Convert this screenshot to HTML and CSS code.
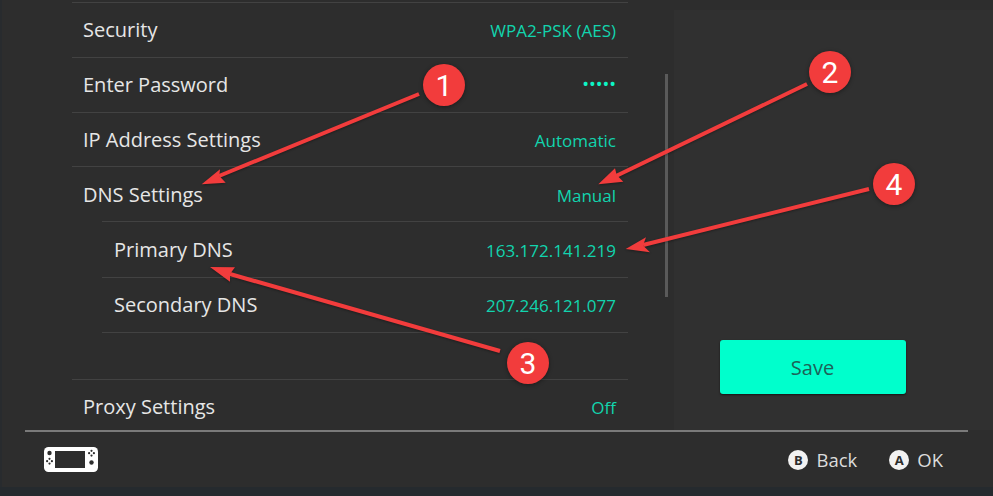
FILE: index.html
```html
<!DOCTYPE html>
<html lang="en">
<head>
  <meta charset="UTF-8">
  <title>DNS Settings</title>
  <link rel="stylesheet" href="styles.css">
</head>
<body>
  <div class="screen">
    <div class="main">
      <div class="list-pane">
        <div class="list">
          <div class="row"><span>Security</span><span class="value">WPA2-PSK (AES)</span></div>
          <div class="row"><span>Enter Password</span><span class="value dots">•••••</span></div>
          <div class="row short low"><span>IP Address Settings</span><span class="value">Automatic</span></div>
          <div class="row low"><span>DNS Settings</span><span class="value">Manual</span></div>
          <div class="row sub tall low"><span>Primary DNS</span><span class="value">163.172.141.219</span></div>
          <div class="row sub"><span>Secondary DNS</span><span class="value">207.246.121.077</span></div>
          <div class="spacer"></div>
          <div class="row last"><span>Proxy Settings</span><span class="value">Off</span></div>
        </div>
        <div class="scrollbar"></div>
      </div>
      <div class="side-pane">
        <button class="save">Save</button>
      </div>
    </div>
    <div class="footer">
      <svg class="console" width="54" height="25" viewBox="0 0 54 25">
        <rect x="0" y="0" width="54" height="25" rx="4.5" fill="#fff"/>
        <rect x="11" y="4" width="30" height="17" fill="#2d2d2d"/>
        <circle cx="5.5" cy="6" r="2.2" fill="#2d2d2d"/>
        <circle cx="47.5" cy="15.5" r="2.2" fill="#2d2d2d"/>
        <g fill="#2d2d2d">
          <circle cx="5.5" cy="11.8" r="1.1"/><circle cx="5.5" cy="16.6" r="1.1"/><circle cx="3.1" cy="14.2" r="1.1"/><circle cx="7.9" cy="14.2" r="1.1"/>
          <circle cx="47.5" cy="3.8" r="1.1"/><circle cx="47.5" cy="8.6" r="1.1"/><circle cx="45.1" cy="6.2" r="1.1"/><circle cx="49.9" cy="6.2" r="1.1"/>
        </g>
      </svg>
      <div class="hints">
        <div class="hint"><span class="btn-icon">B</span>Back</div>
        <div class="hint"><span class="btn-icon">A</span>OK</div>
      </div>
    </div>
  </div>

  <!-- annotations drawn on top of the screenshot -->
  <svg class="notes" width="993" height="496" viewBox="0 0 993 496">
    <g class="arrows">
      <g stroke="#f23c3c" stroke-width="4" fill="none">
        <line x1="419" y1="94" x2="219" y2="176"/>
        <line x1="807" y1="84" x2="616" y2="176"/>
        <line x1="869" y1="189" x2="643" y2="245"/>
        <line x1="500" y1="351" x2="230" y2="274"/>
      </g>
      <g fill="#f23c3c">
        <polygon points="201.7,184.3 220,169.3 219.3,176 225.7,182.7"/>
        <polygon points="598.3,184.3 615,168.3 616.7,175 623.3,181.7"/>
        <polygon points="625.7,249 646,237.3 643,245.5 650,252.3"/>
        <polygon points="210,267 235,267.3 230,274 230,281.7"/>
      </g>
    </g>
    <g class="badges">
      <circle cx="444" cy="85" r="21"/>
      <circle cx="830" cy="72" r="21"/>
      <circle cx="894" cy="184" r="21"/>
      <circle cx="528" cy="363" r="21"/>
    </g>
    <g class="badge-nums">
      <text x="444" y="96">1</text>
      <text x="830" y="83">2</text>
      <text x="894" y="195">4</text>
      <text x="528" y="374">3</text>
    </g>
  </svg>
</body>
</html>
```

FILE: styles.css
```css
html, body {
  margin: 0;
  height: 100%;
  background: #252a2e;
}
body {
  font-family: 'Open Sans', 'Noto Sans', sans-serif;
  overflow: hidden;
  position: relative;
}
.screen {
  height: 487px;
  background: #2d2d2d;
  border-left: 2px solid #282b2e;
  box-sizing: border-box;
  display: flex;
  flex-direction: column;
}
.main {
  height: 430px;
  display: flex;
}
.list-pane {
  width: 672px;
  padding-left: 70px;
  box-sizing: border-box;
  display: flex;
}
.list {
  width: 556px;
  padding-top: 2px;
}
.row {
  height: 54px;
  border-top: 1px solid #424242;
  padding: 0 12px 0 11px;
  display: flex;
  align-items: center;
  justify-content: space-between;
  color: #e6e6e6;
  font-size: 20px;
}
.row.short {
  height: 53px;
}
.row.tall {
  height: 55px;
}
.row.sub {
  margin-left: 30px;
  padding-left: 12px;
}
.row > span {
  margin-top: -2px;
}
.row > .value {
  margin-top: 0;
}
.row.low > span {
  margin-top: 0;
}
.row.low > .value {
  margin-top: 2px;
}
.spacer {
  height: 46px;
  border-top: 1px solid #424242;
  margin-left: 30px;
}
.value {
  color: #12d4ae;
  font-size: 17px;
}
.dots {
  font-size: 18px;
  color: #0df5c5;
}
.row > .dots {
  margin-top: -2px;
}
.scrollbar {
  width: 3px;
  height: 223px;
  margin: 74px 0 0 37px;
  background: #5a5a5a;
}
.side-pane {
  flex: 1;
  background: #303030;
  display: flex;
  align-items: flex-start;
  justify-content: center;
  margin-top: 10px;
}
.save {
  width: 186px;
  height: 54px;
  margin: 330px 0 0 -42px;
  border: none;
  border-radius: 3px;
  background: #00ffcc;
  color: #1d6258;
  font-family: inherit;
  font-size: 20px;
  box-shadow: 0 1px 2px rgba(0,0,0,0.6);
}
.footer {
  flex: 1;
  margin: 0 25px 0 23px;
  border-top: 2px solid #7a7a7a;
  display: flex;
  align-items: center;
  justify-content: space-between;
  padding: 0 25px 0 19px;
}
.hints {
  display: flex;
  gap: 32px;
}
.hint {
  display: flex;
  align-items: center;
  gap: 8px;
  color: #dcdcdc;
  font-size: 18.5px;
}
.btn-icon {
  width: 20px;
  height: 20px;
  border-radius: 50%;
  background: #f2f2f2;
  color: #2d2d2d;
  font-size: 13px;
  font-weight: 700;
  display: flex;
  align-items: center;
  justify-content: center;
}
.notes {
  position: absolute;
  top: 0;
  left: 0;
}
.arrows {
  filter: drop-shadow(0 1px 1px rgba(0,0,0,0.35));
}
.badges {
  fill: #f23c3c;
  filter: drop-shadow(0 1px 2px rgba(0,0,0,0.4));
}
.badge-nums text {
  fill: #fff;
  font-family: 'Roboto', sans-serif;
  font-size: 30px;
  font-weight: 400;
  text-anchor: middle;
}
```
